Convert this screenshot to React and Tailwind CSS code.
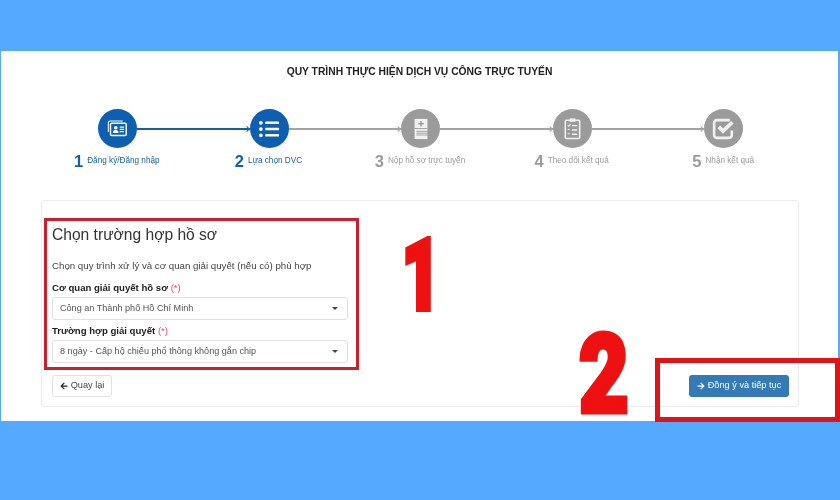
import React from 'react';
import {FaArrowLeft, FaArrowRight, FaListUl} from 'react-icons/fa';

const IdCards = () => (
  <svg viewBox="0 0 24 24" className="w-[21px] h-[21px]" fill="none" stroke="#fff">
    <path d="M1.5 16V5.5a2 2 0 0 1 2-2H18" strokeWidth="1.2" />
    <rect x="4" y="6" width="18" height="14" rx="1.5" fill="#0f5fb0" strokeWidth="1.6" />
    <circle cx="10" cy="11" r="2" fill="#fff" stroke="none" />
    <path d="M6.8 17c0-2.5 1.4-3.5 3.2-3.5s3.2 1 3.2 3.5z" fill="#fff" stroke="none" />
    <path d="M14.5 10.5h5M14.5 13h5M14.5 15.5h5" strokeWidth="1.3" />
  </svg>
);

const FileForm = () => (
  <svg viewBox="0 0 24 24" className="w-[22px] h-[22px]">
    <path d="M5 1h14v22H5z" fill="#f1f1f1" />
    <path d="M12 3.2v6M9 6.2h6" stroke="#9b9b9b" strokeWidth="1.6" />
    <path d="M5 11.5h14M7 14.5h14M7 16.5h14M7 18.5h14" stroke="#9b9b9b" strokeWidth="1" />
  </svg>
);

const Clipboard = () => (
  <svg viewBox="0 0 24 24" className="w-[23px] h-[23px]" fill="none" stroke="#f1f1f1">
    <rect x="4.5" y="3.5" width="15" height="19" rx="1" strokeWidth="1.6" />
    <rect x="9" y="1.5" width="6" height="3.5" fill="#f1f1f1" stroke="none" />
    <path d="M7 8.5l1 1 2-2M7 13h2M7 17.5h2" strokeWidth="1.2" />
    <path d="M11.5 9h5.5M11.5 13.5h5.5M11.5 18h5.5" strokeWidth="1.5" />
  </svg>
);

const CheckBox = () => (
  <svg viewBox="0 0 24 24" className="w-[25px] h-[25px]" fill="none" stroke="#f1f1f1">
    <path d="M20 14v4.500a2.500 2.500 0 0 1-2.500 2.500h-12A2.500 2.500 0 0 1 3 18.500V6.500A2.500 2.500 0 0 1 5.500 4H18" strokeWidth="2.500" />
    <path d="M7.500 10.500l4 4L20.500 6" strokeWidth="3.600" />
  </svg>
);

const steps = [
  {n: '1', label: 'Đăng ký/Đăng nhập', icon: <IdCards />, active: true},
  {n: '2', label: 'Lựa chọn DVC', icon: <FaListUl className="text-white w-[20px] h-[20px]" />, active: true},
  {n: '3', label: 'Nộp hồ sơ trực tuyến', icon: <FileForm />},
  {n: '4', label: 'Theo dõi kết quả', icon: <Clipboard />},
  {n: '5', label: 'Nhận kết quả', icon: <CheckBox />},
];

const Connector = ({active}) => (
  <div className="flex-1 flex items-center">
    <div className={`flex-1 h-[2px] ${active ? 'bg-[#17609f]' : 'bg-[#a3a3a3]'}`} />
    <svg viewBox="0 0 6 10" className="w-[4px] h-[8px] -ml-[4px]" fill="none"
         stroke={active ? '#17609f' : '#a3a3a3'} strokeWidth="1.6">
      <path d="M1 1l4 4-4 4" />
    </svg>
  </div>
);

const Select = ({children}) => (
  <div className="h-[23px] flex items-center justify-between pl-[7px] pr-[8px] border border-[#e2e2e2] rounded-[3px] bg-white text-[9.1px] text-[#555]">
    <span>{children}</span>
    <span className="mr-[1px] border-x-[3px] border-t-[3px] border-x-transparent border-t-[#444]" />
  </div>
);

export default function App() {
  return (
    <div className="relative w-[840px] h-[500px] overflow-hidden bg-[#55aaff] font-['Liberation_Sans',Arial,sans-serif] pt-[51px] pl-px">
      <div className="w-[837px] h-[370px] bg-white blur-[0.4px]">
        <div className="pt-[14px] text-center text-[10.3px] leading-[14px] font-bold text-[#222]">
          QUY TRÌNH THỰC HIỆN DỊCH VỤ CÔNG TRỰC TUYẾN
        </div>

        <div className="mt-[30px] ml-[97px] mr-[95px] flex items-center">
          {steps.map((s, i) => (
            <React.Fragment key={s.n}>
              <div className={`w-[39px] h-[39px] rounded-full flex items-center justify-center ${s.active ? 'bg-[#0f5fb0]' : 'bg-[#9b9b9b]'}`}>
                {s.icon}
              </div>
              {i < 4 && <Connector active={i === 0} />}
            </React.Fragment>
          ))}
        </div>

        <div className="mt-[3px] ml-[40px] w-[758px] grid grid-cols-5">
          {steps.map(s => (
            <div key={s.n} className={`flex items-center justify-center gap-[4px] h-[20px] ${s.active ? 'text-[#17609f]' : 'text-[#9b9b9b]'}`}>
              <span className="text-[16.5px] leading-none font-bold">{s.n}</span>
              <span className="text-[8.2px] leading-none mt-[1px]">{s.label}</span>
            </div>
          ))}
        </div>

        <div className="mt-[29px] ml-[40px] w-[758px] h-[207px] border border-[#ececec] rounded-[3px] pt-[24px] pl-[10px] pr-[9px] flex flex-col">
          <div className="w-[296px]">
            <div className="text-[15.6px] leading-[20px] text-[#333]">Chọn trường hợp hồ sơ</div>
            <div className="mt-[15px] text-[9.7px] leading-[12px] text-[#444]">Chọn quy trình xử lý và cơ quan giải quyết (nếu có) phù hợp</div>
            <div className="mt-[10px] mb-[3px] text-[9.6px] leading-[12px] font-bold text-[#222]">
              Cơ quan giải quyết hồ sơ <span className="font-normal text-[#d9534f]">(*)</span>
            </div>
            <Select>Công an Thành phố Hồ Chí Minh</Select>
            <div className="mt-[5px] mb-[3px] text-[9.6px] leading-[12px] font-bold text-[#222]">
              Trường hợp giải quyết <span className="font-normal text-[#d9534f]">(*)</span>
            </div>
            <Select>8 ngày - Cấp hộ chiếu phổ thông không gắn chip</Select>
          </div>
          <div className="mt-[12px] flex items-start justify-between">
            <button className="w-[60px] h-[22px] flex items-center justify-center gap-[3px] border border-[#e2e2e2] rounded-[3px] bg-white text-[9.2px] text-[#444]">
              <FaArrowLeft className="w-[8px] h-[8px] text-[#222]" /> Quay lại
            </button>
            <button className="w-[100px] h-[22px] flex items-center justify-center gap-[3px] rounded-[3px] bg-[#337ab7] text-[9.2px] text-white">
              <FaArrowRight className="w-[8px] h-[8px]" /> Đồng ý và tiếp tục
            </button>
          </div>
        </div>
      </div>

      {/* annotations drawn over the screenshot */}
      <div className="absolute left-[44px] top-[218px] w-[315px] h-[152px] border-[3px] border-[#c9202e]" />
      <div className="absolute left-[655px] top-[358px] w-[185px] h-[64px] border-[5px] border-[#e01414]" />
      <div className="absolute left-[402px] top-[210px] text-[98px] leading-[132px] font-black font-['Roboto',sans-serif] text-[#ee1111] origin-left scale-x-[0.67] [-webkit-text-stroke:6px_#ee1111]">1</div>
      <div className="absolute left-[579px] top-[309px] text-[110px] leading-[132px] font-black font-['Roboto',sans-serif] text-[#ee1111] origin-left scale-x-[0.78] [-webkit-text-stroke:5px_#ee1111]">2</div>
    </div>
  );
}
